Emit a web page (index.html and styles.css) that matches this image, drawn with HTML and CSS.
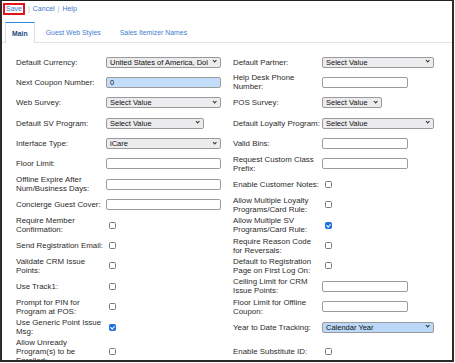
FILE: index.html
```html
<!DOCTYPE html>
<html>
<head>
<meta charset="utf-8">
<link rel="stylesheet" href="styles.css">
</head>
<body>
<div class="frame">
  <div class="toolbar">
    <a class="link save">Save</a><span class="sep">|</span><a class="link">Cancel</a><span class="sep">|</span><a class="link">Help</a>
  </div>
  <div class="tabs">
    <span class="tab active">Main</span>
    <span class="tab">Guest Web Styles</span>
    <span class="tab">Sales Itemizer Names</span>
  </div>
  <div class="form">
    <div class="lbl">Default Currency:</div>
    <div class="fld"><span class="sel w115"><select class="cur"><option>United States of America, Dollar</option></select></span></div>
    <div class="lbl">Default Partner:</div>
    <div class="fld"><span class="sel w112"><select><option>Select Value</option></select></span></div>

    <div class="lbl">Next Coupon Number:</div>
    <div class="fld"><input class="txt w115 hl" type="text" value="0"></div>
    <div class="lbl">Help Desk Phone Number:</div>
    <div class="fld"><input class="txt w86" type="text"></div>

    <div class="lbl">Web Survey:</div>
    <div class="fld"><span class="sel w115"><select><option>Select Value</option></select></span></div>
    <div class="lbl">POS Survey:</div>
    <div class="fld"><span class="sel w60"><select><option>Select Value</option></select></span></div>

    <div class="lbl">Default SV Program:</div>
    <div class="fld"><span class="sel w98"><select><option>Select Value</option></select></span></div>
    <div class="lbl">Default Loyalty Program:</div>
    <div class="fld"><span class="sel w112"><select><option>Select Value</option></select></span></div>

    <div class="lbl">Interface Type:</div>
    <div class="fld"><span class="sel w115"><select><option>iCare</option></select></span></div>
    <div class="lbl">Valid Bins:</div>
    <div class="fld"><input class="txt w86" type="text"></div>

    <div class="lbl">Floor Limit:</div>
    <div class="fld"><input class="txt w115" type="text"></div>
    <div class="lbl">Request Custom Class Prefix:</div>
    <div class="fld"><input class="txt w86" type="text"></div>

    <div class="lbl">Offline Expire After Num/Business Days:</div>
    <div class="fld"><input class="txt w115" type="text"></div>
    <div class="lbl">Enable Customer Notes:</div>
    <div class="fld"><input class="chk" type="checkbox"></div>

    <div class="lbl">Concierge Guest Cover:</div>
    <div class="fld"><input class="txt w115" type="text"></div>
    <div class="lbl">Allow Multiple Loyalty Programs/Card Rule:</div>
    <div class="fld"><input class="chk" type="checkbox"></div>

    <div class="lbl">Require Member Confirmation:</div>
    <div class="fld"><input class="chk" type="checkbox"></div>
    <div class="lbl">Allow Multiple SV Programs/Card Rule:</div>
    <div class="fld"><input class="chk" type="checkbox" checked></div>

    <div class="lbl">Send Registration Email:</div>
    <div class="fld"><input class="chk" type="checkbox"></div>
    <div class="lbl">Require Reason Code for Reversals:</div>
    <div class="fld"><input class="chk" type="checkbox"></div>

    <div class="lbl">Validate CRM Issue Points:</div>
    <div class="fld"><input class="chk" type="checkbox"></div>
    <div class="lbl">Default to Registration Page on First Log On:</div>
    <div class="fld"><input class="chk" type="checkbox"></div>

    <div class="lbl">Use Track1:</div>
    <div class="fld"><input class="chk" type="checkbox"></div>
    <div class="lbl">Ceiling Limit for CRM Issue Points:</div>
    <div class="fld"><input class="txt w86" type="text"></div>

    <div class="lbl">Prompt for PIN for Program at POS:</div>
    <div class="fld"><input class="chk" type="checkbox"></div>
    <div class="lbl">Floor Limit for Offline Coupon:</div>
    <div class="fld"><input class="txt w86" type="text"></div>

    <div class="lbl">Use Generic Point Issue Msg:</div>
    <div class="fld"><input class="chk" type="checkbox" checked></div>
    <div class="lbl">Year to Date Tracking:</div>
    <div class="fld"><span class="sel w112 hl"><select><option>Calendar Year</option></select></span></div>

    <div class="lbl">Allow Unready Program(s) to be Enrolled:</div>
    <div class="fld"><input class="chk" type="checkbox"></div>
    <div class="lbl">Enable Substitute ID:</div>
    <div class="fld"><input class="chk" type="checkbox"></div>
  </div>
</div>
</body>
</html>
```

FILE: styles.css
```css
html, body {
  margin: 0;
  padding: 0;
  background: #ffffff;
}
body {
  font-family: "Liberation Sans", Arial, sans-serif;
  color: #2b2b2b;
}
.frame {
  box-sizing: border-box;
  width: 454px;
  height: 362px;
  border-top: 1px solid #222222;
  border-left: 2px solid #2a2a2a;
  border-right: 2px solid #2a2a2a;
  border-bottom: 2px solid #2a2a2a;
  box-shadow: 0 1px 0 #9a9a9a;
  overflow: hidden;
  background: #ffffff;
}
.toolbar {
  display: flex;
  align-items: center;
  padding: 2px 0 0 1px;
  height: 12px;
  font-size: 7px;
}
.link {
  color: #3b78c9;
  text-decoration: none;
  line-height: 8px;
}
.save {
  border: 2px solid #e3141c;
  padding: 0 1px;
  height: 8px;
}
.sep {
  color: #b5b5b5;
  margin: 0 3px;
  line-height: 8px;
}
.tabs {
  display: flex;
  align-items: stretch;
  margin-top: 7px;
  padding-left: 3px;
  height: 20px;
  border-bottom: 1px solid #dfe3ea;
  font-size: 6.9px;
}
.tab {
  display: flex;
  align-items: center;
  padding: 0 9.5px;
  color: #3f80d2;
}
.tab.active {
  padding: 0 6px;
  margin-right: 1.5px;
  border-top: 1.5px solid #2f86dd;
  border-left: 1px solid #d9dde4;
  border-right: 1px solid #d9dde4;
  margin-bottom: -1px;
  background: #ffffff;
  color: #1c4a85;
  font-weight: bold;
}
.form {
  display: grid;
  grid-template-columns: 90px 127px 89px 1fr;
  row-gap: 2.4px;
  padding: 10px 0 0 14px;
  font-size: 7.9px;
}
.lbl {
  display: flex;
  align-items: center;
  min-height: 18px;
  line-height: 9px;
  color: #2b2b2b;
}
.fld {
  display: flex;
  align-items: center;
  min-height: 18px;
}
.txt {
  box-sizing: border-box;
  height: 11px;
  margin: 0;
  padding: 0 3px;
  border: 1px solid #9c9c9c;
  border-radius: 2px;
  background: #ffffff;
  font-family: "Liberation Sans", Arial, sans-serif;
  font-size: 7.4px;
  color: #111111;
  outline: none;
}
.txt.hl {
  background: #c4ddfa;
}
.sel {
  position: relative;
  display: flex;
  height: 11px;
}
.sel select {
  appearance: none;
  -webkit-appearance: none;
  box-sizing: border-box;
  width: 100%;
  height: 11px;
  margin: 0;
  padding: 0 11px 0 3px;
  border: 1px solid #9a9a9a;
  border-radius: 2px;
  background: #ececef;
  font-family: "Liberation Sans", Arial, sans-serif;
  font-size: 7.5px;
  line-height: 9px;
  color: #111111;
  outline: none;
}
.sel select.cur {
  padding-right: 12px;
}
.sel.hl select {
  background: #bcd8f8;
}
.sel::after {
  content: "";
  position: absolute;
  right: 5px;
  top: 2.6px;
  width: 2.4px;
  height: 2.4px;
  border-right: 1px solid #333333;
  border-bottom: 1px solid #333333;
  transform: rotate(45deg);
}
.w115 { width: 115px; }
.w112 { width: 112px; }
.w98 { width: 98px; }
.w86 { width: 86px; }
.w60 { width: 60px; }
.chk {
  appearance: none;
  -webkit-appearance: none;
  position: relative;
  box-sizing: border-box;
  width: 7px;
  height: 7px;
  margin: 0 0 0 3px;
  border: 1px solid #7a7a7a;
  border-radius: 1.5px;
  background: #ffffff;
}
.chk:checked {
  background: #1f6fe0;
  border-color: #1f6fe0;
}
.chk:checked::after {
  content: "";
  position: absolute;
  left: 1.4px;
  top: 0.1px;
  width: 1.6px;
  height: 3.2px;
  border-right: 1px solid #ffffff;
  border-bottom: 1px solid #ffffff;
  transform: rotate(45deg);
}
```
